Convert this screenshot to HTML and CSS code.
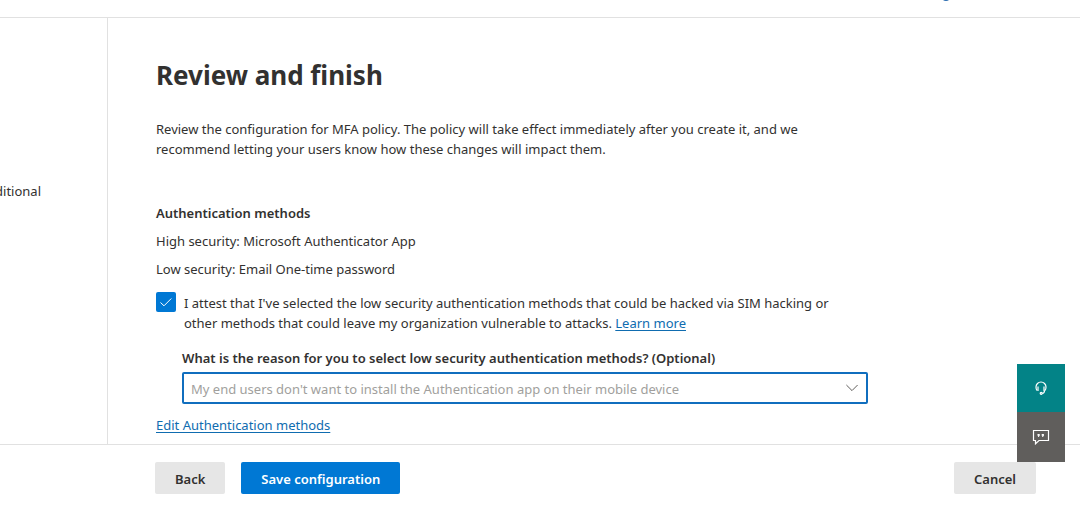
FILE: index.html
```html
<!DOCTYPE html>
<html lang="en">
<head>
<meta charset="utf-8">
<meta name="viewport" content="width=device-width, initial-scale=1">
<title>Review and finish</title>
<link rel="stylesheet" href="styles.css">
</head>
<body>
<div class="wizard">
  <header class="topbar"><span class="badge"></span></header>
  <div class="body">
    <nav class="steps"><span class="step">ditional</span></nav>
    <main class="content">
      <h1 class="title">Review and finish</h1>
      <p class="intro">Review the configuration for MFA policy. The policy will take effect immediately after you create it, and we recommend letting your users know how these changes will impact them.</p>
      <h2 class="subtitle">Authentication methods</h2>
      <p class="line">High security: Microsoft Authenticator App</p>
      <p class="line">Low security: Email One-time password</p>
      <div class="attest">
        <span class="check">
          <input class="check-input" type="checkbox" id="attest" checked>
          <svg class="check-mark" viewBox="0 0 20 20" aria-hidden="true"><path d="M4.5 10.5l3.5 3.3 7.3-7.3"/></svg>
        </span>
        <label class="attest-text" for="attest">I attest that I've selected the low security authentication methods that could be hacked via SIM hacking or other methods that could leave my organization vulnerable to attacks. <a class="link" href="#">Learn more</a></label>
      </div>
      <div class="reason">
        <label class="reason-label" for="reason">What is the reason for you to select low security authentication methods? (Optional)</label>
        <div class="select">
          <select class="select-input" id="reason">
            <option>My end users don't want to install the Authentication app on their mobile device</option>
          </select>
          <svg class="chevron" viewBox="0 0 12 8" aria-hidden="true"><path d="M.4 1l5.6 5.6L11.6 1"/></svg>
        </div>
      </div>
      <a class="link edit" href="#">Edit Authentication methods</a>
    </main>
  </div>
  <footer class="footer">
    <button class="btn" type="button">Back</button>
    <button class="btn primary" type="button">Save configuration</button>
    <button class="btn cancel" type="button">Cancel</button>
  </footer>
  <div class="float">
    <button class="float-btn help" type="button" aria-label="Help">
      <svg width="12" height="14" viewBox="0 0 12 14" aria-hidden="true"><path d="M2 9.500C1 8.700 1 7.600 1 6a5 5 0 0 1 10 0c0 1.600 0 2.700-1 3.500M3 5.500v4.500M9 5.500v4.500M9.500 9.500c0 2-.9 2.800-2.300 2.800"/><circle cx="6.200" cy="12.300" r="1"/></svg>
    </button>
    <button class="float-btn feedback" type="button" aria-label="Feedback">
      <svg width="18" height="16" viewBox="0 0 18 16" aria-hidden="true"><path d="M1.500 1.500h15v10H7L3.500 14.800v-3.300h-2z"/><path class="dots" d="M5.500 5h2.200v1.700L6.700 8h-.9l.5-1.300h-.8zM9.700 5h2.200v1.700L10.900 8H10l.5-1.300h-.8z"/></svg>
    </button>
  </div>
</div>
</body>
</html>
```
FILE: styles.css
```css
* { box-sizing: border-box; }

body {
  margin: 0;
  color: #323130;
  background: #fff;
  font: 13px/20px "Noto Sans", "Open Sans", sans-serif;
}

h1, h2, p { margin: 0; }

.wizard {
  position: relative;
  display: flex;
  flex-direction: column;
  min-height: 100vh;
}

.topbar {
  position: relative;
  height: 18px;
  border-bottom: 1px solid #e1e1e1;
}

.badge {
  position: absolute;
  top: -9px;
  right: 129px;
  width: 10px;
  height: 10px;
  border-radius: 50%;
  background: #2b6cb0;
}

.body {
  display: flex;
  flex: 1;
}

.steps {
  display: flex;
  flex: 0 0 108px;
  align-items: flex-start;
  justify-content: flex-end;
  padding: 163px 66px 0 0;
  overflow: hidden;
  border-right: 1px solid #e1e1e1;
}

.content {
  flex: 0 1 808px;
  padding: 39px 48px 8px;
}

.title {
  font-size: 26px;
  font-weight: 700;
  line-height: 36px;
}

.intro {
  max-width: 664px;
  margin-top: 26px;
}

.subtitle {
  margin-top: 44px;
  font-size: 13px;
  font-weight: 600;
  line-height: 20px;
}

.line { margin-top: 8px; }

.attest {
  display: flex;
  gap: 8px;
  max-width: 696px;
  margin-top: 14px;
}

.check {
  position: relative;
  flex: 0 0 20px;
  height: 20px;
  margin-top: -1px;
}

.check-input {
  display: block;
  width: 20px;
  height: 20px;
  margin: 0;
  appearance: none;
  border-radius: 2px;
  background: #0078d4;
}

.check-mark {
  position: absolute;
  inset: 0;
  pointer-events: none;
  fill: none;
  stroke: #fff;
}

.link {
  color: #0f6cb0;
  text-decoration: underline;
  text-underline-offset: 2px;
}

.reason { margin: 15px 0 0 26px; }

.reason-label {
  display: block;
  font-weight: 600;
}

.select {
  position: relative;
  margin-top: 4px;
}

.select-input {
  display: block;
  width: 100%;
  height: 32px;
  padding: 2px 32px 0 7px;
  appearance: none;
  border: 2px solid #106ebe;
  border-radius: 2px;
  background: #fff;
  color: #a19f9d;
  font: inherit;
}

.chevron {
  position: absolute;
  top: 12px;
  right: 10px;
  width: 12px;
  height: 8px;
  pointer-events: none;
  fill: none;
  stroke: #605e5c;
}

.edit {
  display: inline-block;
  margin-top: 11px;
}

.footer {
  display: flex;
  gap: 16px;
  padding: 17px 44px 17px 155px;
  border-top: 1px solid #e1e1e1;
}

.btn {
  height: 32px;
  padding: 2px 20px 0;
  border: 0;
  border-radius: 2px;
  background: #e6e6e6;
  color: #323130;
  font: inherit;
  font-weight: 600;
}

.primary {
  background: #0078d4;
  color: #fff;
}

.cancel { margin-left: auto; }

.float {
  position: absolute;
  right: 15px;
  bottom: 49px;
  display: flex;
  flex-direction: column;
}

.float-btn {
  display: grid;
  place-items: center;
  width: 48px;
  height: 48px;
  padding: 0;
  border: 0;
}

.float-btn svg {
  fill: none;
  stroke: #fff;
  stroke-width: 1.2;
}

.help { background: #038387; }

.feedback {
  height: 50px;
  background: #605e5c;
}

.float-btn .dots {
  fill: #fff;
  stroke: none;
}
```
